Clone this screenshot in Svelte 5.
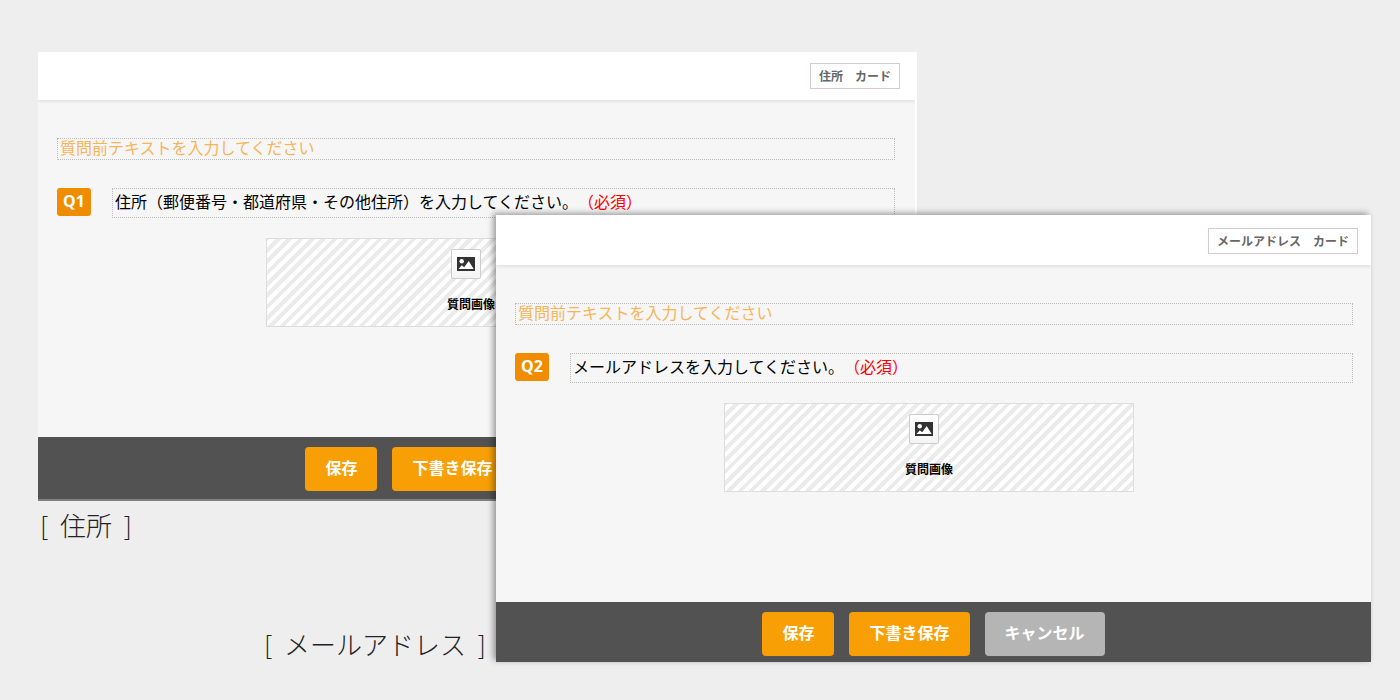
<script lang="ts">
	interface Card {
		id: string;
		name: string;
		number: string;
		question: string;
		save_actions: string[];
	}

	const cards: Card[] = [
		{
			id: 'address',
			name: '住所',
			number: 'Q1',
			question: '住所（郵便番号・都道府県・その他住所）を入力してください。',
			save_actions: ['保存', '下書き保存'],
		},
		{
			id: 'mail',
			name: 'メールアドレス',
			number: 'Q2',
			question: 'メールアドレスを入力してください。',
			save_actions: ['保存', '下書き保存'],
		},
	];
</script>

<main class="canvas">
	{#each cards as card (card.id)}
		<figure class="preview {card.id}">
			<section class="card">
				<header class="card-header">
					<span class="card-type">{card.name}　カード</span>
				</header>
				<div class="card-body">
					<input
						class="lead-text"
						type="text"
						aria-label="質問前テキスト"
						placeholder="質問前テキストを入力してください"
					/>
					<div class="question-row">
						<span class="number">{card.number}</span>
						<p class="question">
							{card.question}<span class="required">（必須）</span>
						</p>
					</div>
					<div class="image-area">
						<div class="image-drop">
							<button
								type="button"
								class="image-button"
								aria-labelledby="{card.id}-image"
							>
								<svg viewBox="0 0 18 14" width="18" height="14">
									<path d="M0 0h18v14H0z" fill="#333" />
									<circle cx="4.7" cy="4.3" r="2.2" fill="#fff" />
									<path
										d="M1.5 12L4.8 8.2L7.2 10.2L11.7 4L16.7 12z"
										fill="#fff"
									/>
								</svg>
							</button>
							<span class="image-label" id="{card.id}-image">質問画像</span>
						</div>
					</div>
				</div>
				<footer class="card-footer">
					{#each card.save_actions as action}
						<button type="button" class="action">{action}</button>
					{/each}
					<button type="button" class="action cancel">キャンセル</button>
				</footer>
			</section>
			<figcaption>[ <span class="caption-name">{card.name}</span> ]</figcaption>
		</figure>
	{/each}
</main>

<style>
	:global(body) {
		margin: 0;
		background: #eee;
	}
	.canvas {
		display: grid;
		align-items: start;
		padding: 52px 29px 38px 38px;
		font-family: 'Noto Sans CJK JP', sans-serif;
		font-size: 16px;
		color: #000;
		text-spacing-trim: space-all;
	}
	/* both previews share one cell, the second lies over the first */
	.preview {
		grid-area: 1 / 1;
		display: flex;
		min-width: 0;
		margin: 0;
	}
	.address {
		flex-direction: column;
		margin-right: 454px;
	}
	.mail {
		flex-direction: row-reverse;
		align-items: flex-end;
		margin-top: 163px;
	}
	.card {
		flex: 1;
		min-width: 0;
		background: #f6f6f6;
	}
	.address .card {
		border-right: 2px solid #fff;
	}
	.mail .card {
		box-shadow:
			-3px -2px 6px rgba(0, 0, 0, 0.35),
			0 0 5px rgba(0, 0, 0, 0.04);
	}
	.card-header {
		display: flex;
		justify-content: flex-end;
		padding: 13px 13px 11px;
		background: #fff;
		box-shadow: 0 2px 3px rgba(0, 0, 0, 0.08);
		clip-path: inset(0 0 -6px 0);
	}
	.address .card-header {
		padding: 11px 15px 11px;
	}
	.card-type {
		padding: 0 8px;
		border: 1px solid #d5cbcd;
		font-size: 12px;
		font-weight: 700;
		line-height: 24px;
		color: #666;
	}
	.card-body {
		padding: 38px 18px 110px 19px;
	}
	.address .card-body {
		padding-right: 20px;
	}
	.lead-text {
		display: block;
		box-sizing: border-box;
		width: 100%;
		height: 22px;
		padding: 0 2px 4px;
		border: 1px dotted #bbb;
		background: transparent;
		font: inherit;
		line-height: 16px;
	}
	.lead-text::placeholder {
		color: #f6b45a;
		opacity: 1;
	}
	.question-row {
		display: flex;
		align-items: flex-start;
		gap: 21px;
		margin-top: 28px;
	}
	.number {
		flex: none;
		width: 34px;
		padding-bottom: 2px;
		border-radius: 3px;
		background: #f08c00;
		font-family: 'Noto Sans', sans-serif;
		font-weight: 700;
		line-height: 26px;
		text-align: center;
		color: #fff;
	}
	.question {
		flex: 1;
		margin: 0;
		padding: 0 2px 4px;
		border: 1px dotted #bbb;
		line-height: 24px;
	}
	.required {
		color: #f00;
	}
	.image-area {
		margin-top: 20px;
		padding-right: 10px;
	}
	.image-drop {
		display: flex;
		flex-direction: column;
		align-items: center;
		box-sizing: border-box;
		width: 410px;
		max-width: 100%;
		margin: 0 auto;
		padding: 10px 0 12px;
		border: 1px solid #ddd;
		background: repeating-linear-gradient(
			-45deg,
			#fff 0 4px,
			#ebebeb 4px 8px
		);
	}
	.image-button {
		display: flex;
		align-items: center;
		justify-content: center;
		width: 30px;
		height: 30px;
		margin-right: 10px;
		padding: 0;
		border: 1px solid #ccc;
		border-radius: 2px;
		background: linear-gradient(#fff, #f4f4f4);
	}
	.image-label {
		margin-top: 15px;
		font-size: 12px;
		font-weight: 700;
		line-height: 20px;
	}
	.card-footer {
		display: flex;
		justify-content: center;
		gap: 15px;
		padding: 10px 0 6px;
		background: #525252;
	}
	.address .card-footer {
		padding-bottom: 8px;
		border-bottom: 2px solid #808080;
	}
	.action {
		height: 44px;
		padding: 0 20px 4px;
		border: 0;
		border-radius: 4px;
		background: #f79f05;
		font: inherit;
		font-weight: 700;
		color: #fff;
	}
	.cancel {
		background: #b5b5b5;
	}
	figcaption {
		font-size: 26px;
		font-weight: 300;
		line-height: 32px;
		color: #222;
	}
	.address figcaption {
		padding: 8px 2px 0;
	}
	.mail figcaption {
		box-sizing: border-box;
		flex: 0 0 458px;
		padding: 0 10px 2px 0;
		text-align: right;
	}
	.caption-name {
		padding: 0 6px;
	}
</style>
